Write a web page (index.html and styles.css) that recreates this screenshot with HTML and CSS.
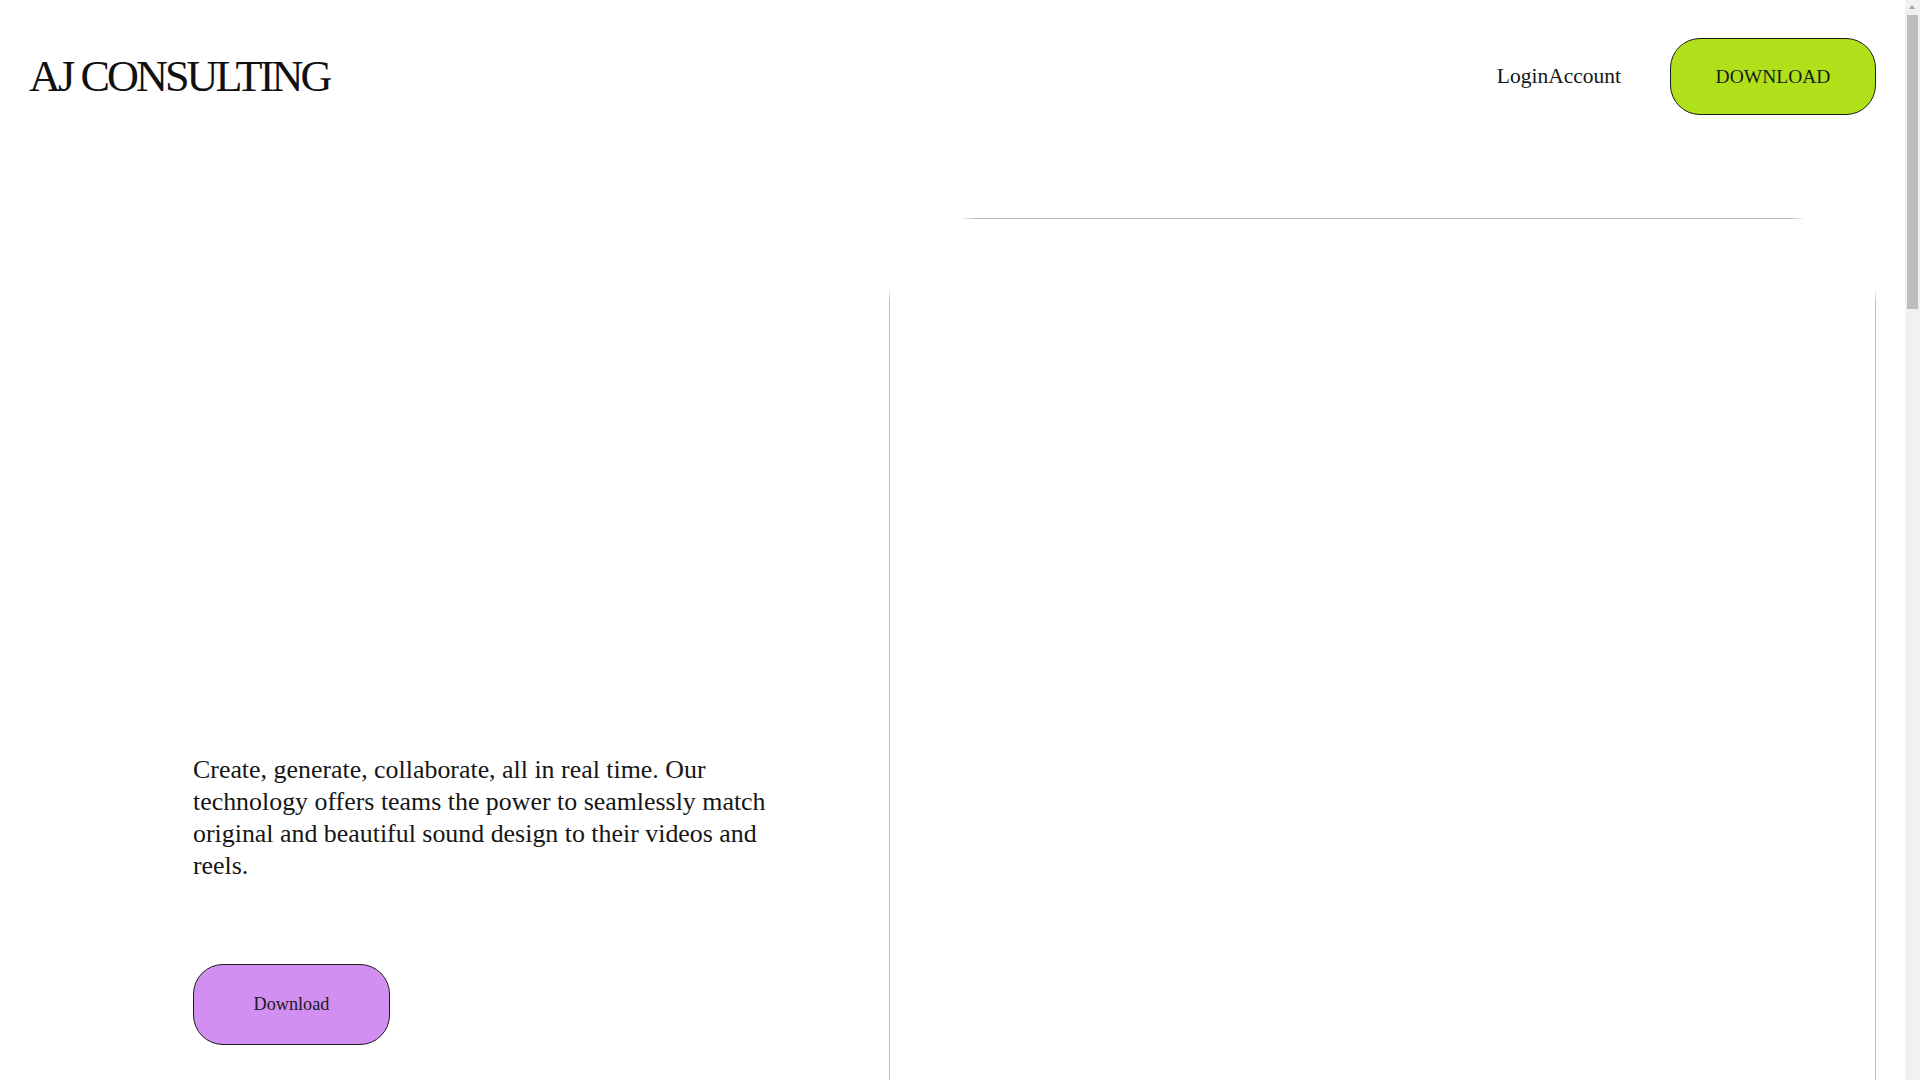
FILE: index.html
```html
<!DOCTYPE html>
<html lang="en">
<head>
<meta charset="utf-8">
<title>AJ Consulting</title>
<link rel="stylesheet" href="styles.css">
</head>
<body>
<header class="site-header">
  <a class="logo" href="#">AJ CONSULTING</a>
  <nav class="nav">
    <div class="nav-links">
      <a class="nav-link" href="#">Login</a><a class="nav-link" href="#">Account</a>
    </div>
    <a class="btn btn-lime" href="#">DOWNLOAD</a>
  </nav>
</header>

<div class="divider-row">
  <div class="divider-spacer"></div>
  <div class="divider-cell"><div class="divider"></div></div>
</div>

<main class="hero">
  <section class="hero-left">
    <p class="hero-text">Create, generate, collaborate, all in real time. Our technology offers teams the power to seamlessly match original and beautiful sound design to their videos and reels.</p>
    <a class="btn btn-violet" href="#">Download</a>
  </section>
  <section class="hero-right"></section>
</main>

<div class="fake-scrollbar" aria-hidden="true">
  <div class="fake-scrollbar-arrow"></div>
  <div class="fake-scrollbar-thumb"></div>
</div>
</body>
</html>
```

FILE: styles.css
```css
* {
  box-sizing: border-box;
}

html, body {
  margin: 0;
  padding: 0;
  background: #ffffff;
}

body {
  font-family: "Liberation Serif", "Times New Roman", serif;
  color: #141414;
}

a {
  color: inherit;
  text-decoration: none;
}

.site-header {
  display: flex;
  align-items: center;
  justify-content: space-between;
  padding: 38px 44px 38px 29px;
}

.logo {
  font-size: 44.2px;
  letter-spacing: -0.066em;
  color: #111111;
  line-height: normal;
}

.nav {
  display: flex;
  align-items: center;
  gap: 49px;
}

.nav-links {
  display: flex;
}

.nav-link {
  font-size: 21.5px;
  color: #161616;
}

.btn {
  display: inline-flex;
  align-items: center;
  justify-content: center;
  border: 1px solid #1c1c1c;
  border-radius: 30px;
  color: #1a1a1a;
}

.btn-lime {
  height: 77px;
  width: 206px;
  background: #b0e01a;
  font-size: 19.5px;
}

.btn-violet {
  height: 81px;
  width: 197px;
  background: #d28ef0;
  font-size: 18.2px;
  margin-top: 82px;
}

.divider-row {
  display: grid;
  grid-template-columns: 889px 1fr;
  padding-right: 44px;
  margin-top: 65px;
}

.divider-cell {
  padding: 0 71px;
}

.divider {
  height: 1px;
  background: linear-gradient(to right, rgba(184,184,184,0) 0, #b6b6b6 16px, #b6b6b6 calc(100% - 16px), rgba(184,184,184,0) 100%);
}

.hero {
  display: grid;
  grid-template-columns: 889px 1fr;
  padding-right: 44px;
  margin-top: 69px;
}

.hero-left {
  padding: 466px 0 0 193px;
  display: flex;
  flex-direction: column;
  align-items: flex-start;
}

.hero-text {
  margin: 0;
  max-width: 600px;
  font-size: 25.9px;
  line-height: 32px;
  color: #161616;
}

.hero-right {
  min-height: 3562px;
  background:
    linear-gradient(to bottom, rgba(190,190,190,0) 0, #bcbcbc 14px) left top / 1px 100% no-repeat,
    linear-gradient(to bottom, rgba(190,190,190,0) 0, #bcbcbc 14px) right top / 1px 100% no-repeat;
}

.fake-scrollbar {
  position: fixed;
  top: 0;
  right: 0;
  width: 15px;
  height: 100vh;
  background: #f1f1f1;
}

.fake-scrollbar-arrow {
  position: absolute;
  top: 5px;
  left: 4px;
  width: 0;
  height: 0;
  border-left: 3.5px solid transparent;
  border-right: 3.5px solid transparent;
  border-bottom: 4px solid #a3a3a3;
}

.fake-scrollbar-thumb {
  position: absolute;
  top: 15px;
  left: 2px;
  width: 11px;
  height: 294px;
  background: #bdbdbd;
}
```
